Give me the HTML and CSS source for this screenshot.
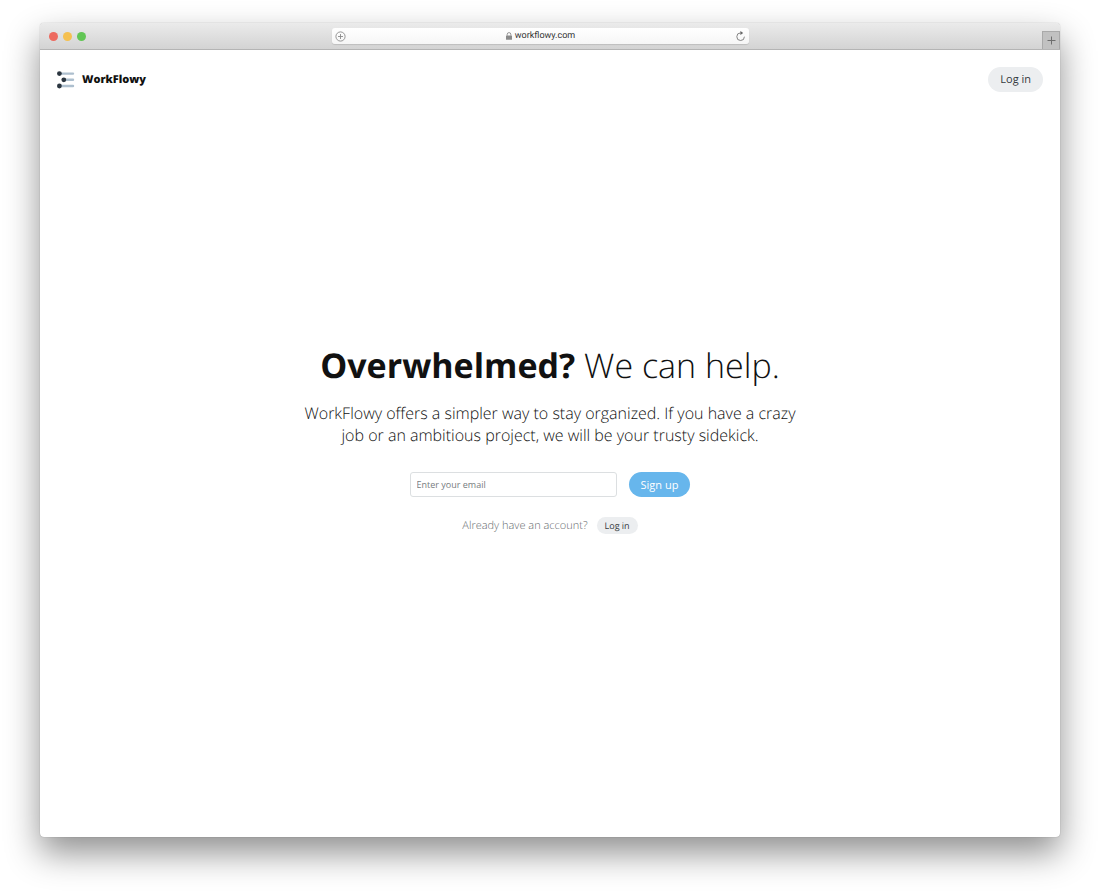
FILE: index.html
```html
<!DOCTYPE html>
<html lang="en">
<head>
    <meta charset="UTF-8">
    <meta name="viewport" content="width=device-width, initial-scale=1.0">
    <title>WorkFlowy</title>
    <link rel="stylesheet" href="styles.css">
</head>
<body>
    <div class="window">
        <div class="toolbar">
            <div class="lights">
                <span class="light red"></span>
                <span class="light yellow"></span>
                <span class="light green"></span>
            </div>
            <div class="address">
                <button class="icon-btn" aria-label="Add bookmark">
                    <svg width="11" height="11" viewBox="0 0 11 11" fill="none" stroke="#8a8a8a">
                        <circle cx="5.5" cy="5.5" r="4.6" stroke-width="0.9"/>
                        <path d="M5.5 3v5M3 5.5h5" stroke-width="0.9"/>
                    </svg>
                </button>
                <div class="url">
                    <svg width="6" height="8" viewBox="0 0 6 8">
                        <rect x="0" y="3.4" width="6" height="4.4" rx="0.5" fill="#8a8a8a"/>
                        <path d="M1.2 3.6V2.4a1.8 1.8 0 0 1 3.6 0v1.2" fill="none" stroke="#8a8a8a" stroke-width="0.9"/>
                    </svg>
                    <span>workflowy.com</span>
                </div>
                <button class="icon-btn" aria-label="Reload">
                    <svg width="11" height="11" viewBox="0 0 11 11">
                        <path d="M5.6 1.9A3.8 3.8 0 1 0 9.4 5.7" fill="none" stroke="#777" stroke-width="0.9"/>
                        <path d="M5.4 0.1L8.2 2 5.4 3.9z" fill="#666"/>
                    </svg>
                </button>
            </div>
            <button class="new-tab" aria-label="New tab">
                <svg width="9" height="9" viewBox="0 0 9 9" stroke="#6e6e6e">
                    <path d="M4.5 0.5v8M0.5 4.5h8"/>
                </svg>
            </button>
        </div>

        <header class="header">
            <a class="brand" href="#">
                <svg width="18" height="18" viewBox="0 0 18 18">
                    <path d="M3 2.6h13M6.8 8.8h9.2M3 15h13" stroke="#adbfce" stroke-width="2.4" stroke-linecap="round"/>
                    <g fill="#2b3640">
                        <circle cx="2.4" cy="2.6" r="2.4"/>
                        <circle cx="6.8" cy="8.8" r="2.4"/>
                        <circle cx="2.4" cy="15" r="2.4"/>
                    </g>
                </svg>
                <span>WorkFlowy</span>
            </a>
            <a class="btn" href="#">Log in</a>
        </header>

        <main class="hero">
            <h1><strong>Overwhelmed?</strong> We can help.</h1>
            <p class="intro">WorkFlowy offers a simpler way to stay organized. If you have a crazy job or an ambitious project, we will be your trusty sidekick.</p>
            <form class="signup">
                <input type="email" class="email" placeholder="Enter your email" aria-label="Enter your email">
                <button type="submit" class="btn btn-primary">Sign up</button>
            </form>
            <div class="account">
                <span>Already have an account?</span>
                <a class="btn btn-small" href="#">Log in</a>
            </div>
        </main>
    </div>
</body>
</html>
```

FILE: styles.css
```css
* {
    box-sizing: border-box;
}
body {
    margin: 0;
    min-height: 100vh;
    padding: 23px 40px 57px;
    display: flex;
    background-color: #fff;
    font-family: "Open Sans", sans-serif;
    text-rendering: geometricPrecision;
    color: #111;
    overflow: hidden;
}
button {
    font-family: inherit;
    border: none;
    padding: 0;
    background: none;
    cursor: pointer;
}
a {
    color: inherit;
    text-decoration: none;
}
svg {
    display: block;
}
.window {
    flex: 1;
    display: flex;
    flex-direction: column;
    background-color: #fff;
    border-radius: 4px;
    box-shadow: 0 0 1px rgba(0, 0, 0, 0.4), 0 16px 34px rgba(0, 0, 0, 0.44);
}

/* browser bar */
.toolbar {
    height: 27px;
    display: grid;
    grid-template-columns: 292fr 417fr 311fr;
    align-items: center;
    background: linear-gradient(#ebebeb, #d3d3d3);
    border-bottom: 1px solid #b4b4b4;
    border-radius: 4px 4px 0 0;
}
.lights {
    display: flex;
    gap: 5px;
    padding-left: 9px;
}
.light {
    width: 9px;
    height: 9px;
    border-radius: 50%;
}
.red {
    background-color: #ed6a5f;
}
.yellow {
    background-color: #f5c04f;
}
.green {
    background-color: #62c655;
}
.address {
    height: 16px;
    padding: 0 3px;
    display: flex;
    align-items: center;
    justify-content: space-between;
    background: linear-gradient(#fff, #f6f6f6);
    border-radius: 3px;
    box-shadow: 0 1px 1px rgba(0, 0, 0, 0.12);
}
.url {
    display: flex;
    align-items: center;
    gap: 3px;
    font-family: Roboto, sans-serif;
    font-size: 9px;
    line-height: 14px;
    color: #333;
}
.new-tab {
    width: 18px;
    height: 18px;
    display: flex;
    align-items: center;
    justify-content: center;
    justify-self: end;
    align-self: end;
    background-color: #c1c1c1;
    border: 1px solid #a9a9a9;
    border-bottom: none;
}

/* page */
.header {
    display: flex;
    align-items: center;
    justify-content: space-between;
    padding: 17px 17px 0;
}
.brand {
    display: flex;
    align-items: center;
    gap: 7px;
    font-size: 11px;
    font-weight: 800;
}
.btn {
    padding: 0 12px;
    border-radius: 13px;
    background-color: #eceef0;
    color: #363b40;
    font-size: 11px;
    line-height: 25px;
}
.btn-primary {
    background-color: #67b6ec;
    color: #fff;
}
.btn-small {
    padding: 0 8px;
    font-size: 9px;
    line-height: 17px;
}
.hero {
    flex: 1;
    display: flex;
    flex-direction: column;
    align-items: center;
    justify-content: center;
    padding: 0 20px 54px;
    text-align: center;
}
h1 {
    margin: 0;
    font-size: 34px;
    font-weight: 300;
    line-height: 50px;
}
h1 strong {
    font-weight: 700;
}
.intro {
    max-width: 500px;
    margin: 12px 0 26px;
    font-size: 16px;
    font-weight: 300;
    line-height: 22px;
}
.signup {
    display: flex;
    align-items: center;
    gap: 12px;
}
.email {
    width: 207px;
    height: 25px;
    padding: 0 6px;
    border: 1px solid #dcdfe1;
    border-radius: 3px;
    font-family: inherit;
    font-size: 9px;
}
.email::placeholder {
    color: #777c80;
}
.account {
    display: flex;
    align-items: center;
    gap: 9px;
    margin-top: 19px;
    font-size: 11px;
    font-weight: 300;
    line-height: 20px;
    color: #666a6e;
}
.account .btn {
    font-weight: 400;
}
```
